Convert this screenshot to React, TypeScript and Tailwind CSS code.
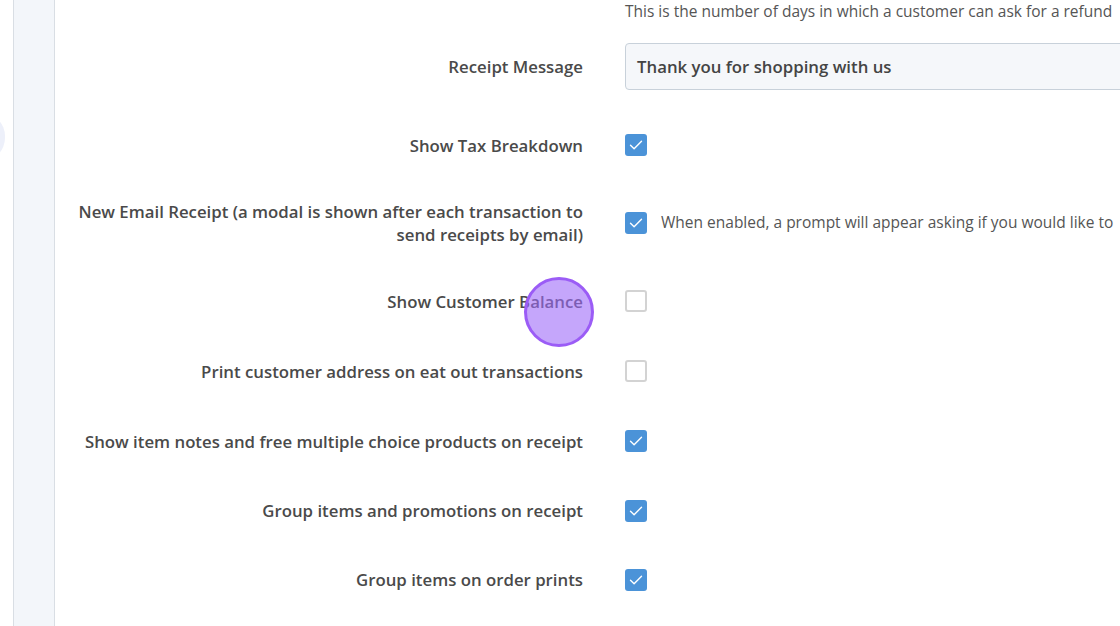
import React from 'react';

const font = { fontFamily: '"Open Sans", "Noto Sans", sans-serif' };

const Check: React.FC<{ on: boolean }> = ({ on }) =>
  on ? (
    <span className="flex h-[22px] w-[22px] shrink-0 items-center justify-center rounded-[3px] bg-[#4b93d8]">
      <svg width="22" height="22" viewBox="0 0 22 22" fill="none">
        <path d="M5.5 11.2l3.6 3.6 7.4-7.6" stroke="#fff" strokeWidth="1.4" strokeLinecap="round" strokeLinejoin="round" />
      </svg>
    </span>
  ) : (
    <span className="block h-[22px] w-[22px] shrink-0 rounded-[3px] border-2 border-[#d3d3d3] bg-white" />
  );

const rows = [
  { label: 'Show Tax Breakdown', on: true, h: 'h-[70px]' },
  {
    label: 'New Email Receipt (a modal is shown after each transaction to send receipts by email)',
    on: true,
    h: 'h-[86px]',
    note: 'When enabled, a prompt will appear asking if you would like to',
  },
  { label: 'Show Customer Balance', on: false, h: 'h-[70px]' },
  { label: 'Print customer address on eat out transactions', on: false, h: 'h-[70px]' },
  { label: 'Show item notes and free multiple choice products on receipt', on: true, h: 'h-[70px]' },
  { label: 'Group items and promotions on receipt', on: true, h: 'h-[69px]' },
  { label: 'Group items on order prints', on: true, h: 'h-[69px]' },
];

export default function App() {
  return (
    <div className="relative flex h-[626px] w-[1120px] overflow-hidden bg-white text-[#4a4a4a]" style={font}>
      {/* sidebar edge */}
      <div className="relative w-[13px] shrink-0">
        <div className="absolute left-[-41px] top-[113px] h-[48px] w-[46px] rounded-full bg-[#edf0fa]" />
      </div>
      <div className="w-[42px] shrink-0 border-x border-x-[#d9dee4] bg-[#f3f6fa]" />

      <div className="flex-1">
        <div className="grid grid-cols-[528px_1fr] gap-x-[42px]">
          <div className="h-[24px]" />
          <div className="flex h-[24px] items-center whitespace-nowrap text-[15.5px] text-[#555]">
            This is the number of days in which a customer can ask for a refund
          </div>

          <div className="mt-[19px] flex h-[47px] items-center justify-end text-right text-[16.8px] font-semibold">
            Receipt Message
          </div>
          <div className="mt-[19px] h-[47px] w-[560px] rounded-[4px] border border-[#c8d1da] bg-[#f5f7fa] px-[11px]">
            <div className="flex h-full items-center text-[16.8px] font-semibold text-[#444]">Thank you for shopping with us</div>
          </div>

          <div className="col-span-2 h-[20px]" />

          {rows.map((r, i) => (
            <React.Fragment key={i}>
              <div className={`${r.h} flex items-center justify-end text-right text-[16.8px] font-semibold leading-[23px]`}>
                <span>{r.label}</span>
              </div>
              <div className={`${r.h} flex items-center gap-[14px] whitespace-nowrap`}>
                <Check on={r.on} />
                {r.note && <span className="text-[15.5px] text-[#555]">{r.note}</span>}
              </div>
            </React.Fragment>
          ))}
        </div>
      </div>

      {/* click highlight */}
      <div className="absolute left-[524px] top-[277px] h-[70px] w-[70px] rounded-full border-[3px] border-[#9b5cf6] bg-[rgba(158,107,248,0.6)]" />
    </div>
  );
}
